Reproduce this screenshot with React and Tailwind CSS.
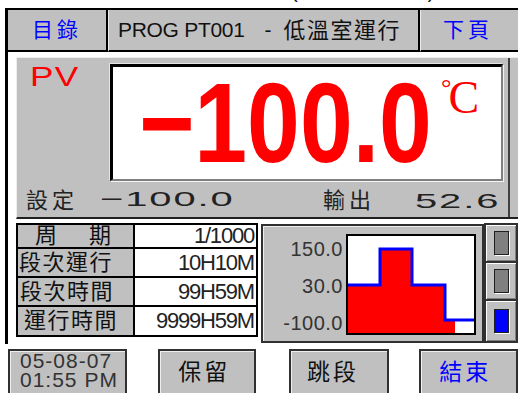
import React from "react";

const rows = [
  { label: "周期", value: "1/1000", h: "h-[24px]", spread: true },
  { label: "段次運行", value: "10H10M", h: "h-[29px]", pl: "pl-[1px]" },
  { label: "段次時間", value: "99H59M", h: "h-[29px]", pl: "pl-[2px]" },
  { label: "運行時間", value: "9999H59M", h: "h-[28px]", pl: "pl-[6px]" },
];

// step profile drawn inside the chart box (inner 126 x 97)
const profile = "M0,49 H32 V13 H64 V49 H97 V84 H126";
const fill = "M0,49 H32 V13 H64 V49 H97 V84 H107 V97 H0 Z";

const App = () => {
  return (
    <div className="w-[518px] h-[393px] overflow-hidden bg-white text-[#111] font-['Liberation_Sans','Noto_Sans_CJK_TC',sans-serif]">
      {/* cut off caption of the page above */}
      <div className="h-[8px] overflow-hidden">
        <div className="-mt-[19px] pl-[1px] text-[20px] leading-[20px] whitespace-nowrap tracking-[5px]">
          圖 2-1 程式運行第一頁面(無溫室運行)
        </div>
      </div>

      <div className="ml-[5px] border-l-[3px] border-t-2 border-black">
        {/* header tabs */}
        <div className="flex h-[42px]">
          <div className="w-[100px] flex items-center justify-center bg-[#c0c0c0] border-r-2 border-b-2 border-black text-[21px] tracking-[4px] text-[#0000ff]">
            目錄
          </div>
          <div className="w-[312px] flex items-center pl-[9px] bg-[#c0c0c0] border-l border-l-[#ececec] border-r-2 border-b-2 border-black text-[21px] whitespace-nowrap">
            <span className="tracking-[-0.3px]">PROG PT001</span>
            <span className="ml-[20px]">-</span>
            <span className="ml-[12px] text-[22px] tracking-[1.5px]">低溫室運行</span>
          </div>
          <div className="flex-1 flex items-center pl-[22px] bg-[#c0c0c0] border-l border-l-[#ececec] border-b-2 border-black text-[21px] tracking-[4px] text-[#0000ff]">
            下頁
          </div>
        </div>

        {/* PV panel */}
        <div className="mt-[5px] ml-[8px] w-[502px] h-[162px] flex bg-[#c0c0c0] border-t border-l border-[#eeeeee] border-b-2 border-b-[#202020]">
          <div className="w-[493px] flex flex-col border-r-2 border-r-[#404040] pt-[6px]">
            <div className="flex h-[117px]">
              <div className="w-[93px] pl-[13px]">
                <span className="inline-block origin-left scale-x-[1.3] text-[27px] leading-none tracking-[1px] text-[#ff0000]">
                  PV
                </span>
              </div>
              <div className="w-[393px] flex bg-white border-t-[3px] border-l-[3px] border-black border-r-2 border-b-2 border-r-[#808080] border-b-[#808080] shadow-[1px_1px_0_#f4f4f4,-1px_-1px_0_#e4e4e4]">
                <div className="ml-[34px] w-[276px] flex items-center justify-center">
                  <span className="inline-block scale-x-[0.84] text-[113px] leading-none font-bold text-[#ff0000] whitespace-nowrap">
                    −100.0
                  </span>
                </div>
                <div className="ml-[18px] mt-[8px] self-start flex items-start leading-none text-[#ff0000] font-['Liberation_Serif',serif]">
                  <span className="text-[26px] -mr-[3px]">°</span>
                  <span className="text-[46px]">C</span>
                </div>
              </div>
            </div>
            <div className="flex-1 flex items-center pt-[2px] pl-[9px] whitespace-nowrap">
              <span className="w-[74px] text-[22px] tracking-[4px] text-[#222]">設定</span>
              <span className="w-[223px]">
                <span className="inline-block origin-left scale-x-[1.9] text-[21px] leading-none tracking-[1px] text-[#222]">
                  −100.0
                </span>
              </span>
              <span className="w-[92px] text-[22px] tracking-[4px] text-[#222]">輸出</span>
              <span className="inline-block origin-left scale-x-[1.9] text-[21px] leading-none tracking-[1px] text-[#222]">
                52.6
              </span>
            </div>
          </div>
        </div>

        {/* lower section */}
        <div className="mt-[4px] ml-[8px] flex items-start h-[121px]">
          <div className="w-[242px] border-2 border-black bg-white">
            {rows.map((row, i) => (
              <div
                key={row.label}
                className={`flex ${row.h} ${i < rows.length - 1 ? "border-b-2 border-black" : ""}`}
              >
                <div
                  className={`w-[117px] flex items-center bg-[#c0c0c0] border-r-2 border-black text-[22px] leading-none ${
                    row.spread ? "justify-between pl-[17px] pr-[22px]" : `${row.pl} tracking-[1.5px]`
                  }`}
                >
                  {row.spread ? (
                    <>
                      <span>周</span>
                      <span>期</span>
                    </>
                  ) : (
                    row.label
                  )}
                </div>
                <div className="flex-1 flex items-center justify-end pr-[2px] text-[22px] leading-none tracking-[-1.2px] text-[#222]">
                  {row.value}
                </div>
              </div>
            ))}
          </div>

          <div className="ml-[3px] mt-[1px] w-[223px] h-[119px] flex bg-[#c0c0c0] border-2 border-[#303030] shadow-[inset_1px_1px_0_#eeeeee]">
            <div className="w-[80px] mt-[4px] flex flex-col text-[20px] tracking-[0.5px] text-[#333]">
              <div className="h-[37px] flex items-center justify-end">150.0</div>
              <div className="h-[37px] flex items-center justify-end">30.0</div>
              <div className="h-[37px] flex items-center justify-end">-100.0</div>
            </div>
            <div className="ml-[3px] mt-[8px] w-[130px] h-[101px] bg-white border-2 border-black">
              <svg width="126" height="97" viewBox="0 0 126 97" className="block">
                <path d={fill} fill="#ff0000" />
                <path d={profile} fill="none" stroke="#0000ff" strokeWidth="3" />
              </svg>
            </div>
          </div>

          <div className="w-[34px] h-[120px] flex flex-col">
            <div className="h-[40px] flex items-center justify-center bg-[#c0c0c0] border-2 border-[#303030] shadow-[inset_1px_1px_0_#ffffff,inset_-1px_-1px_0_#808080]">
              <div className="w-[15px] h-[24px] bg-[#808080] border border-[#202020] shadow-[1px_1px_0_#ffffff]" />
            </div>
            <div className="h-[38px] flex items-center justify-center bg-[#c0c0c0] border-2 border-t-0 border-[#303030] shadow-[inset_1px_1px_0_#ffffff,inset_-1px_-1px_0_#808080]">
              <div className="w-[15px] h-[24px] bg-[#808080] border border-[#202020] shadow-[1px_1px_0_#ffffff]" />
            </div>
            <div className="h-[42px] flex items-center justify-center bg-[#c0c0c0] border-2 border-t-0 border-[#303030] shadow-[inset_1px_1px_0_#ffffff,inset_-1px_-1px_0_#808080]">
              <div className="w-[15px] h-[24px] bg-[#0000ff] border border-[#202020] shadow-[1px_1px_0_#ffffff]" />
            </div>
          </div>
        </div>
      </div>

      {/* bottom buttons */}
      <div className="mt-[5px] flex h-[46px]">
        <div className="ml-[8px] w-[120px] flex flex-col pl-[10px] bg-[#c0c0c0] border-2 border-[#303030] shadow-[inset_1px_1px_0_#eeeeee] text-[21px] leading-[19px] tracking-[1px] text-[#333]">
          <span>05-08-07</span>
          <span>01:55 PM</span>
        </div>
        <div className="ml-[31px] w-[99px] flex items-center justify-center pr-[6px] bg-[#c0c0c0] border-2 border-[#303030] shadow-[inset_1px_1px_0_#eeeeee] text-[23px] tracking-[3px]">
          保留
        </div>
        <div className="ml-[33px] w-[100px] flex items-center justify-center pr-[12px] bg-[#c0c0c0] border-2 border-[#303030] shadow-[inset_1px_1px_0_#eeeeee] text-[23px] tracking-[3px]">
          跳段
        </div>
        <div className="ml-[30px] w-[100px] flex items-center justify-center pr-[6px] bg-[#c0c0c0] border-2 border-[#303030] shadow-[inset_1px_1px_0_#eeeeee] text-[23px] tracking-[3px] text-[#0000ff]">
          結束
        </div>
      </div>
    </div>
  );
};

export default App;
